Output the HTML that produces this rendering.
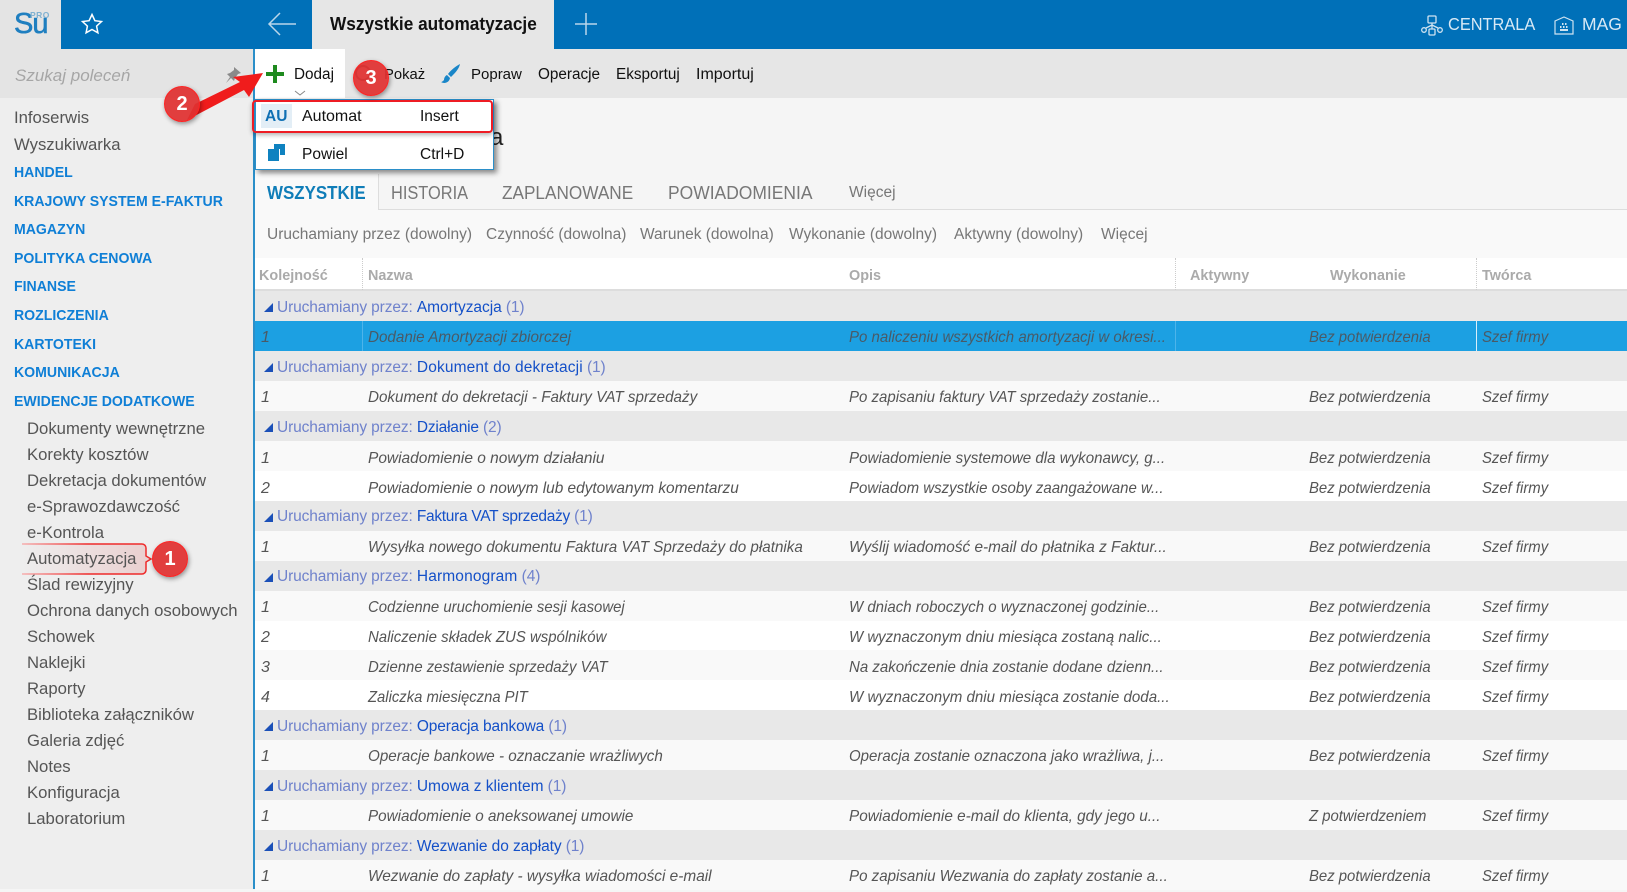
<!DOCTYPE html>
<html lang="pl"><head><meta charset="utf-8"><title>Wszystkie automatyzacje</title>
<style>
html,body{margin:0;padding:0}
body{width:1627px;height:889px;overflow:hidden;position:relative;background:#f5f5f5;font-family:"Liberation Sans",sans-serif;color:#333}
div,span.a{position:absolute;white-space:nowrap}
.s{left:14px;font-size:16.7px;line-height:24px;color:#555}
.h{left:14px;font-size:15px;line-height:24px;color:#0f7fd6;font-weight:bold;transform:scaleX(.94);transform-origin:left}
.u{left:27px;font-size:16.700px;line-height:24px;color:#555}
.t{font-size:15.300px;line-height:24px;color:#111;top:63px}
.tb{font-size:18px;line-height:30px;color:#777;top:178px;transform-origin:left}
.f{font-size:15.5px;line-height:24px;color:#777;top:223px}
.c{font-size:15px;line-height:24px;color:#aaa;font-weight:bold;top:264px;transform:scaleX(.96);transform-origin:left}
.g,.r{left:255px;width:1372px;height:30px}
.g{background:#e8e8e8;font-size:15.5px;line-height:30px;color:#6f82cc}
.g b{position:absolute;left:9px;top:12px;width:0;height:0;border-style:solid;border-width:0 0 9px 9px;border-color:transparent transparent #1b50b8 transparent}
.g span{position:absolute;left:22px;top:2px;letter-spacing:-.12px}
.g.e span{top:1px}.g.d span{top:2px}
.g i{font-style:normal;color:#1450c8;letter-spacing:.14px}
.r{background:#f9f9f9;font-size:16px;line-height:30px;color:#555;font-style:italic}
.r span{position:absolute;top:2px;transform-origin:left}
.r.d span{top:3px}
.r .n{left:6px}.r .m{left:113px;transform:scaleX(.95)}.r .o{left:594px;transform:scaleX(.938)}.r .w{left:1054px;transform:scaleX(.93)}.r .k{left:1227px;transform:scaleX(.93)}
.w2{background:#fff}
.sel{background:#1ca0e2;color:#4a5a66}
.dot{width:34px;height:34px;border-radius:50%;background:rgba(224,48,48,.93);border:1px solid #f22;box-shadow:1px 2px 5px rgba(0,0,0,.4);color:#fff;font-weight:bold;font-size:20px;line-height:34px;text-align:center}
.mi{font-size:15.5px;line-height:24px;color:#111;z-index:6}
</style></head><body>

<!-- top bar -->
<div style="left:0;top:0;width:1627px;height:49px;background:#0070b8"></div>
<div style="left:0;top:0;width:61px;height:49px;background:#e4e4e4"></div>
<div style="left:14px;top:4px;font-size:29px;line-height:40px;color:#1f7fc0;letter-spacing:-1px;-webkit-text-stroke:.6px #1f7fc0">Su</div>
<div style="left:30px;top:10px;font-size:8.500px;line-height:10px;font-weight:bold;letter-spacing:.5px;color:#7fb0d0">PRO</div>
<svg style="position:absolute;left:80px;top:12px" width="24" height="24" viewBox="0 0 24 24" fill="none" stroke="#fff" stroke-width="1.5"><path d="M12 2.5l2.9 6.2 6.6.8-4.9 4.6 1.3 6.7-5.9-3.3-5.9 3.3 1.3-6.7L2.500 9.500l6.600-.8z"/></svg>
<svg style="position:absolute;left:266px;top:11px" width="32" height="26" viewBox="0 0 32 26" fill="none" stroke="#b9d6ea" stroke-width="1.5"><path d="M30 13H3M14 2L3 13l11 11"/></svg>
<div style="left:312px;top:0;width:242px;height:49px;background:#e6e6e6"></div>
<div style="left:330px;top:9px;font-size:18px;line-height:30px;color:#111;font-weight:bold;transform:scaleX(.957);transform-origin:left">Wszystkie automatyzacje</div>
<svg style="position:absolute;left:574px;top:12px" width="24" height="24" fill="none" stroke="#b9d6ea" stroke-width="1.5"><path d="M12 1v22M1 12h22"/></svg>
<svg style="position:absolute;left:1421px;top:15px" width="22" height="21" viewBox="0 0 22 21" fill="none" stroke="#cfe3f1" stroke-width="1.3"><rect x="7" y="1" width="8" height="7" rx="1"/><rect x="8" y="14" width="6" height="6" rx="1"/><circle cx="3" cy="15" r="2.300"/><circle cx="19" cy="15" r="2.300"/><path d="M11 8v6M5 13l6-3 6 3"/></svg>
<div style="left:1448px;top:11px;font-size:17.500px;line-height:26px;color:#d8e9f5;transform:scaleX(.935);transform-origin:left">CENTRALA</div>
<svg style="position:absolute;left:1554px;top:16px" width="20" height="19" viewBox="0 0 20 19" fill="none" stroke="#cfe3f1" stroke-width="1.200"><path d="M1 5l9-4 9 4v13H1z"/><path d="M8 8h1.500M11 8h1.500M6 11h1.500M9 11h1.500M12 11h1.500M6 14h8" stroke-width="2"/></svg>
<div style="left:1582px;top:11px;font-size:17.500px;line-height:26px;color:#d8e9f5">MAG</div>

<!-- sidebar -->
<div style="left:0;top:49px;width:253px;height:840px;background:#eeeeee"></div>
<div style="left:0;top:49px;width:253px;height:49px;background:#e4e4e4"></div>
<div style="left:15px;top:64px;font-size:17px;line-height:24px;color:#a6a6a6;font-style:italic">Szukaj poleceń</div>
<svg style="position:absolute;left:224px;top:66px" width="18" height="18" viewBox="0 0 18 18" fill="#8a8a8a"><path d="M10 1l7 6-3 1-3 4-1 3-3-3-5 5 4-6-3-3 3-1 4-3z"/></svg>
<div class="s" style="top:106px">Infoserwis</div>
<div class="s" style="top:133px">Wyszukiwarka</div>
<div class="h" style="top:161px">HANDEL</div>
<div class="h" style="top:190px">KRAJOWY SYSTEM E-FAKTUR</div>
<div class="h" style="top:218px">MAGAZYN</div>
<div class="h" style="top:247px">POLITYKA CENOWA</div>
<div class="h" style="top:275px">FINANSE</div>
<div class="h" style="top:304px">ROZLICZENIA</div>
<div class="h" style="top:333px">KARTOTEKI</div>
<div class="h" style="top:361px">KOMUNIKACJA</div>
<div class="h" style="top:390px">EWIDENCJE DODATKOWE</div>
<div class="u" style="top:417px">Dokumenty wewnętrzne</div>
<div class="u" style="top:443px">Korekty kosztów</div>
<div class="u" style="top:469px">Dekretacja dokumentów</div>
<div class="u" style="top:495px">e-Sprawozdawczość</div>
<div class="u" style="top:521px">e-Kontrola</div>
<svg style="position:absolute;left:18px;top:540px" width="136" height="38" viewBox="0 0 136 38"><defs><linearGradient id="cf" gradientUnits="userSpaceOnUse" x1="4" y1="0" x2="128" y2="0"><stop offset="0" stop-color="#eeeeee"/><stop offset="1" stop-color="#ead0d0"/></linearGradient><linearGradient id="cs" gradientUnits="userSpaceOnUse" x1="4" y1="0" x2="70" y2="0"><stop offset="0" stop-color="#f6b0b0"/><stop offset="1" stop-color="#ee2a2a"/></linearGradient></defs><path d="M4 4H124a4 4 0 0 1 4 4V16l5 3-5 3V30a4 4 0 0 1-4 4H4" fill="url(#cf)" stroke="url(#cs)" stroke-width="1.500"/></svg>
<div class="u" style="top:547px">Automatyzacja</div>
<div class="u" style="top:573px">Ślad rewizyjny</div>
<div class="u" style="top:599px">Ochrona danych osobowych</div>
<div class="u" style="top:625px">Schowek</div>
<div class="u" style="top:651px">Naklejki</div>
<div class="u" style="top:677px">Raporty</div>
<div class="u" style="top:703px">Biblioteka załączników</div>
<div class="u" style="top:729px">Galeria zdjęć</div>
<div class="u" style="top:755px">Notes</div>
<div class="u" style="top:781px">Konfiguracja</div>
<div class="u" style="top:807px">Laboratorium</div>

<!-- main -->
<div style="left:253px;top:49px;width:2px;height:840px;background:#2b8fc9;z-index:3"></div>
<div style="left:255px;top:49px;width:1372px;height:49px;background:#e6e6e6"></div>
<div style="left:255px;top:49px;width:90px;height:49px;background:#fff"></div>
<svg style="position:absolute;left:266px;top:65px" width="18" height="18"><path d="M9 0v18M0 9h18" stroke="#1e8a1e" stroke-width="4"/></svg>
<div class="t" style="left:294px">Dodaj</div>
<svg style="position:absolute;left:294px;top:90px" width="12" height="6" fill="none" stroke="#888"><path d="M1 1l5 4 5-4"/></svg>
<svg style="position:absolute;left:354px;top:64px" width="20" height="20" fill="none" stroke="#666" stroke-width="2"><circle cx="9" cy="9" r="7"/></svg>
<div class="t" style="left:384px;font-size:14.800px">Pokaż</div>
<svg style="position:absolute;left:441px;top:63px" width="20" height="22" viewBox="0 0 20 22" fill="#1a86c8"><path d="M19 1C15 3 10 7 7 11l3 3C14 10 18 6 19 1zM6 12c-2 1-3 3-3 5-1 1-2 2-3 2 3 2 8 1 9-4z"/></svg>
<div class="t" style="left:471px;font-size:15px">Popraw</div>
<div class="t" style="left:538px">Operacje</div>
<div class="t" style="left:616px">Eksportuj</div>
<div class="t" style="left:696px;font-size:16px">Importuj</div>

<div style="left:490px;top:122px;font-size:24px;line-height:32px;color:#222">a</div>

<!-- tabs -->
<div style="left:255px;top:209px;width:1372px;height:1px;background:#ddd"></div>
<div style="left:255px;top:174px;width:123px;height:36px;background:#f9f9f9;border-right:1px solid #ddd"></div>
<div style="left:267px;top:178px;font-size:18px;line-height:30px;color:#0f7db8;font-weight:bold;transform:scaleX(.94);transform-origin:left">WSZYSTKIE</div>
<div class="tb" style="left:391px;transform:scaleX(.91)">HISTORIA</div>
<div class="tb" style="left:502px;transform:scaleX(.955)">ZAPLANOWANE</div>
<div class="tb" style="left:668px;transform:scaleX(.97)">POWIADOMIENIA</div>
<div class="f" style="left:849px;top:181px">Więcej</div>

<!-- filters -->
<div style="left:255px;top:210px;width:1372px;height:48px;background:#f9f9f9"></div>
<div class="f" style="left:267px">Uruchamiany przez (dowolny)</div>
<div class="f" style="left:486px">Czynność (dowolna)</div>
<div class="f" style="left:640px">Warunek (dowolna)</div>
<div class="f" style="left:789px">Wykonanie (dowolny)</div>
<div class="f" style="left:954px">Aktywny (dowolny)</div>
<div class="f" style="left:1101px">Więcej</div>

<!-- header -->
<div style="left:255px;top:258px;width:1372px;height:31px;background:#fff;border-bottom:2px solid #ddd"></div>
<div class="c" style="left:259px">Kolejność</div>
<div class="c" style="left:368px">Nazwa</div>
<div class="c" style="left:849px">Opis</div>
<div class="c" style="left:1190px">Aktywny</div>
<div class="c" style="left:1330px">Wykonanie</div>
<div class="c" style="left:1482px">Twórca</div>
<div style="left:362px;top:258px;height:32px;border-left:1px dotted #ccc"></div>
<div style="left:1175px;top:258px;height:32px;border-left:1px dotted #ccc"></div>
<div style="left:1476px;top:258px;height:32px;border-left:1px dotted #ccc"></div>

<!-- rows -->
<div class="g" style="top:291px"><b></b><span>Uruchamiany przez: <i style="letter-spacing:-.04px">Amortyzacja</i> (1)</span></div>
<div class="r sel" style="top:321px"><span class="n">1</span><span class="m">Dodanie Amortyzacji zbiorczej</span><span class="o">Po naliczeniu wszystkich amortyzacji w okresi...</span><span class="w">Bez potwierdzenia</span><span class="k">Szef firmy</span></div>
<div style="left:362px;top:321px;width:1px;height:30px;background:#4db4ea"></div>
<div style="left:1175px;top:321px;width:1px;height:30px;background:#4db4ea"></div>
<div style="left:1476px;top:321px;width:1px;height:30px;background:#d8eefa"></div>
<div class="g" style="top:351px"><b></b><span>Uruchamiany przez: <i>Dokument do dekretacji</i> (1)</span></div>
<div class="r" style="top:381px"><span class="n">1</span><span class="m">Dokument do dekretacji - Faktury VAT sprzedaży</span><span class="o">Po zapisaniu faktury VAT sprzedaży zostanie...</span><span class="w">Bez potwierdzenia</span><span class="k">Szef firmy</span></div>
<div class="g" style="top:411px"><b></b><span>Uruchamiany przez: <i style="letter-spacing:-.2px">Działanie</i> (2)</span></div>
<div class="r d" style="top:441px"><span class="n">1</span><span class="m" style="transform:scaleX(.967)">Powiadomienie o nowym działaniu</span><span class="o" style="transform:scaleX(.944)">Powiadomienie systemowe dla wykonawcy, g...</span><span class="w">Bez potwierdzenia</span><span class="k">Szef firmy</span></div>
<div class="r w2 d" style="top:471px"><span class="n">2</span><span class="m" style="transform:scaleX(.963)">Powiadomienie o nowym lub edytowanym komentarzu</span><span class="o">Powiadom wszystkie osoby zaangażowane w...</span><span class="w">Bez potwierdzenia</span><span class="k">Szef firmy</span></div>
<div class="g e" style="top:501px"><b></b><span>Uruchamiany przez: <i style="letter-spacing:-.3px">Faktura VAT sprzedaży</i> (1)</span></div>
<div class="r" style="top:531px"><span class="n">1</span><span class="m">Wysyłka nowego dokumentu Faktura VAT Sprzedaży do płatnika</span><span class="o" style="transform:scaleX(.96)">Wyślij wiadomość e-mail do płatnika z Faktur...</span><span class="w">Bez potwierdzenia</span><span class="k">Szef firmy</span></div>
<div class="g e" style="top:561px"><b></b><span>Uruchamiany przez: <i>Harmonogram</i> (4)</span></div>
<div class="r" style="top:591px"><span class="n">1</span><span class="m" style="transform:scaleX(.931)">Codzienne uruchomienie sesji kasowej</span><span class="o">W dniach roboczych o wyznaczonej godzinie...</span><span class="w">Bez potwierdzenia</span><span class="k">Szef firmy</span></div>
<div class="r w2" style="top:621px"><span class="n">2</span><span class="m" style="transform:scaleX(.934)">Naliczenie składek ZUS wspólników</span><span class="o">W wyznaczonym dniu miesiąca zostaną nalic...</span><span class="w">Bez potwierdzenia</span><span class="k">Szef firmy</span></div>
<div class="r d" style="top:650px"><span class="n">3</span><span class="m" style="transform:scaleX(.93)">Dzienne zestawienie sprzedaży VAT</span><span class="o">Na zakończenie dnia zostanie dodane dzienn...</span><span class="w">Bez potwierdzenia</span><span class="k">Szef firmy</span></div>
<div class="r w2 d" style="top:680px"><span class="n">4</span><span class="m" style="transform:scaleX(.926)">Zaliczka miesięczna PIT</span><span class="o" style="transform:scaleX(.944)">W wyznaczonym dniu miesiąca zostanie doda...</span><span class="w">Bez potwierdzenia</span><span class="k">Szef firmy</span></div>
<div class="g d" style="top:710px"><b></b><span>Uruchamiany przez: <i style="letter-spacing:-.12px">Operacja bankowa</i> (1)</span></div>
<div class="r" style="top:740px"><span class="n">1</span><span class="m">Operacje bankowe - oznaczanie wrażliwych</span><span class="o">Operacja zostanie oznaczona jako wrażliwa, j...</span><span class="w">Bez potwierdzenia</span><span class="k">Szef firmy</span></div>
<div class="g" style="top:770px"><b></b><span>Uruchamiany przez: <i style="letter-spacing:0">Umowa z klientem</i> (1)</span></div>
<div class="r" style="top:800px"><span class="n">1</span><span class="m">Powiadomienie o aneksowanej umowie</span><span class="o" style="transform:scaleX(.957)">Powiadomienie e-mail do klienta, gdy jego u...</span><span class="w">Z potwierdzeniem</span><span class="k">Szef firmy</span></div>
<div class="g" style="top:830px"><b></b><span>Uruchamiany przez: <i style="letter-spacing:-.08px">Wezwanie do zapłaty</i> (1)</span></div>
<div class="r" style="top:860px"><span class="n">1</span><span class="m" style="transform:scaleX(.962)">Wezwanie do zapłaty - wysyłka wiadomości e-mail</span><span class="o" style="transform:scaleX(.944)">Po zapisaniu Wezwania do zapłaty zostanie a...</span><span class="w">Bez potwierdzenia</span><span class="k">Szef firmy</span></div>

<!-- dropdown -->
<div style="left:255px;top:99px;width:237px;height:69px;background:#fff;border:1px solid #2b8fc9;box-shadow:3px 3px 5px rgba(0,0,0,.45);z-index:5"></div>
<div style="left:261px;top:104px;width:31px;height:24px;background:#e3eef6;z-index:6"></div>
<div style="left:265px;top:105px;font-size:15.500px;line-height:24px;font-weight:bold;color:#0f70b4;z-index:6">AU</div>
<div class="mi" style="left:302px;top:105px;font-size:16px">Automat</div>
<div class="mi" style="left:420px;top:105px">Insert</div>
<svg style="position:absolute;left:268px;top:144px;z-index:6" width="17" height="17" fill="#0f82c0"><path d="M6 0h11v11h-5V5H6zM0 5h11v12H0z"/></svg>
<div class="mi" style="left:302px;top:143px">Powiel</div>
<div class="mi" style="left:420px;top:143px">Ctrl+D</div>
<div style="left:252px;top:100px;width:237px;height:29px;border:2px solid #ee1c24;border-radius:4px;box-shadow:0 2px 5px rgba(0,0,0,.3);z-index:7"></div>

<!-- annotations -->
<svg style="position:absolute;left:180px;top:60px;z-index:8" width="90" height="70" viewBox="0 0 90 70"><path d="M7 60L15 44 60 22 53 17 83 13 69 37 64 30z" fill="#f01c1c"/></svg>
<div class="dot" style="left:164px;top:86px;z-index:9">2</div>
<div class="dot" style="left:353px;top:60px;z-index:9">3</div>
<div class="dot" style="left:152px;top:541px;z-index:9">1</div>
</body></html>
